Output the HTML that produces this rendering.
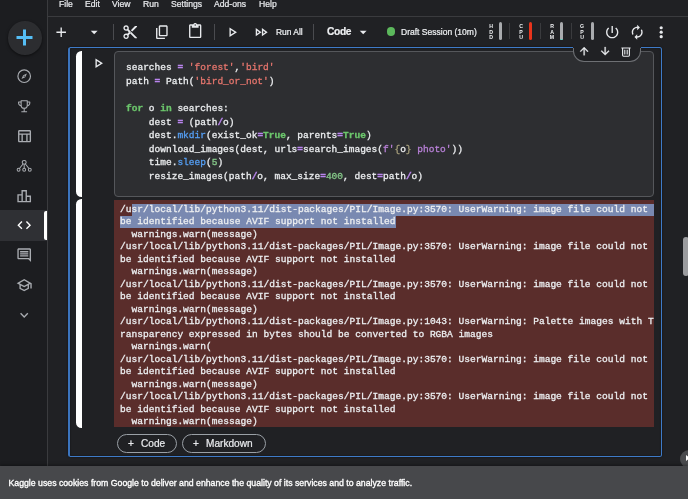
<!DOCTYPE html>
<html><head><meta charset="utf-8">
<style>
*{box-sizing:border-box;margin:0;padding:0}
html,body{width:688px;height:499px;overflow:hidden;background:#202124;font-family:"Liberation Sans",sans-serif;color:#eef0f2;-webkit-text-stroke:0.22px currentColor}
.abs{position:absolute}
#side{left:0;top:0;width:48px;height:499px;background:#1c1d20;border-right:1px solid #3a3b3e}
#menubar{left:48px;top:0;width:640px;height:17px;background:#202124;border-bottom:1px solid #3a3b3e}
#menubar span{position:absolute;top:-3.2px;font-size:8.6px;line-height:14px;color:#e8eaed}
#toolbar{left:48px;top:17px;width:640px;height:30px;background:#202124}
.vsep{position:absolute;width:1px;background:#4a4b4f}
#nb{left:48px;top:47px;width:640px;height:420px;background:#202124}
#cell{left:68px;top:47px;width:593.6px;height:410px;border:1.3px solid #3e7bc8;border-left:2px solid #3b74bd;border-radius:2.5px;box-shadow:0 0 2px rgba(0,0,0,.6),inset 0 0 2px rgba(0,0,0,.5);background:#202124}
.bar{position:absolute;left:75.5px;width:6.6px;background:#fff;border-radius:5.5px 0 0 5.5px}
#code{left:114px;top:51px;width:540px;height:146px;background:#2d2e31;border:1px solid #55575b;border-radius:4px}
pre{font-family:"Liberation Mono",monospace;font-size:9.57px;white-space:pre;color:#eceef0;-webkit-text-stroke:0.3px currentColor}
#code pre{position:absolute;left:11px;top:8.8px;line-height:13.62px;font-size:9.52px}
#out{left:114px;top:200px;width:540px;height:227.3px;background:#5a2d2b;overflow:hidden}
#out pre{position:absolute;left:6px;top:4.2px;line-height:12.48px}
.sel{position:absolute;background:#7989b1}
.k{color:#6cc76c;font-weight:bold}.s{color:#e5756d}.o{color:#bb86f0;font-weight:bold}.f{color:#559ff5}.n{color:#86c98a}.fs{color:#b980d8}.br{color:#a8a07c}
.il{position:absolute;width:6px;text-align:center;font-size:5.2px;line-height:5px;font-weight:bold;color:#f1f3f4;-webkit-text-stroke:0}
.btn{position:absolute;top:433.6px;height:19px;border:1px solid #9aa0a6;border-radius:10px;font-size:10.1px;line-height:17px;color:#e8eaed}
.btn b{position:absolute;font-weight:normal;top:0}
#cookie{left:0;top:465.7px;width:688px;height:34px;background:#47484b;font-size:8.73px;line-height:34.2px;padding-left:8.5px;color:#fff;-webkit-text-stroke:0.32px #fff;box-shadow:0 -1px 3px rgba(0,0,0,.35)}
svg{position:absolute;overflow:visible}
#menubar span,#toolbar span,.btn b,.il,#cookie span,pre{will-change:transform}
</style></head><body>
<div id="nb" class="abs"></div>
<div id="side" class="abs">
  <div class="abs" style="left:8px;top:21px;width:33.5px;height:33.5px;border-radius:50%;background:#2c2d30;box-shadow:0 1px 3px rgba(0,0,0,.55)"></div>
  <div class="abs" style="left:0;top:210px;width:47px;height:31px;background:#2f3034"></div>
  <div class="abs" style="left:44px;top:211px;width:3px;height:29px;background:#fff;border-radius:2px 0 0 2px"></div>
  <svg style="left:15.5px;top:28.5px" width="17" height="17" viewBox="0 0 17 17"><path d="M8.5 0.5v16M0.5 8.5h16" stroke="#55bef5" stroke-width="3" fill="none"/></svg><svg style="left:16.2px;top:67.5px" width="16.4" height="16.4" viewBox="0 0 24 24" fill="none" stroke="#a9acb1" stroke-width="1.7"><circle cx="12" cy="12" r="9.2"/><path d="M16 8l-2.500 5.500L8 16l2.500-5.500z" fill="#a9acb1" stroke="none"/><circle cx="12" cy="12" r="0.9" fill="#1c1d20" stroke="none"/></svg><svg style="left:16.2px;top:98px" width="16.4" height="16.4" viewBox="0 0 24 24" fill="none" stroke="#a9acb1" stroke-width="1.6" stroke-linejoin="round"><path d="M7.500 4h9v6.500a4.500 4.500 0 0 1-9 0z"/><path d="M7.500 5.800H3.800v1.700a3.600 3.600 0 0 0 3.700 3.600M16.500 5.800h3.700v1.700a3.600 3.600 0 0 1-3.700 3.600M12 15v5M7.800 20.200h8.400"/></svg><svg style="left:15.80px;top:127.80px" width="16.4" height="16.4" viewBox="0 0 24 24" fill="#a9acb1"><path d="M20 3H5c-1.1 0-2 .9-2 2v14c0 1.1.9 2 2 2h15c1.1 0 2-.9 2-2V5c0-1.1-.9-2-2-2zm0 2v3H5V5h15zm-5 14h-5v-9h5v9zM5 10h3v9H5v-9zm12 9v-9h3v9h-3z"/></svg><svg style="left:16.2px;top:158px" width="16.4" height="16.4" viewBox="0 0 24 24" fill="none" stroke="#a9acb1" stroke-width="1.5"><circle cx="12" cy="6.400" r="2.900"/><circle cx="3.800" cy="17.200" r="2.100"/><circle cx="12" cy="17.200" r="2.100"/><circle cx="20.200" cy="17.200" r="2.100"/><path d="M12 9.300v5.800M10.300 8.800L5 15.400M13.700 8.800L19 15.400"/></svg><svg style="left:15.80px;top:187.80px" width="16.4" height="16.4" viewBox="0 0 24 24" fill="#a9acb1"><path d="M16 11V3H8v6H2v12h20V11h-6zm-6-6h4v14h-4V5zm-6 6h4v8H4v-8zm16 8h-4v-6h4v6z"/></svg><svg style="left:15.80px;top:217.30px" width="16.4" height="16.4" viewBox="0 0 24 24" fill="#ffffff"><path d="M9.4 16.6L4.8 12l4.6-4.6L8 6l-6 6 6 6 1.4-1.4zm5.2 0l4.6-4.6-4.6-4.6L16 6l6 6-6 6-1.4-1.4z"/></svg><svg style="left:15.80px;top:247.30px" width="16.4" height="16.4" viewBox="0 0 24 24" fill="#a9acb1"><path d="M21.99 4c0-1.1-.89-2-1.99-2H4c-1.1 0-2 .9-2 2v12c0 1.1.9 2 2 2h14l4 4-.01-18zM20 4v13.17L18.830 16H4V4h16zM6 12h12v2H6zm0-3h12v2H6zm0-3h12v2H6z"/></svg><svg style="left:15.80px;top:276.80px" width="16.4" height="16.4" viewBox="0 0 24 24" fill="#a9acb1"><path d="M12 3L1 9l4 2.18v6L12 21l7-3.820v-6l2-1.090V17h2V9L12 3zm6.820 6L12 12.720 5.180 9 12 5.280 18.820 9zM17 15.990l-5 2.730-5-2.730v-3.720L12 15l5-2.730v3.720z"/></svg><svg style="left:15.80px;top:306.80px" width="16.4" height="16.4" viewBox="0 0 24 24" fill="#a9acb1"><path d="M16.59 8.59L12 13.17 7.41 8.59 6 10l6 6 6-6z"/></svg>
</div>
<div id="menubar" class="abs">
  <span style="left:11.25px">File</span><span style="left:36.75px">Edit</span><span style="left:63.75px">View</span><span style="left:94.9px">Run</span><span style="left:122.6px">Settings</span><span style="left:166.1px">Add-ons</span><span style="left:211.1px">Help</span>
</div>
<div id="toolbar" class="abs">
  <div class="vsep" style="left:65px;top:7px;height:16px"></div>
  <div class="vsep" style="left:166px;top:7px;height:16px"></div>
  <div class="vsep" style="left:264.8px;top:7px;height:16px"></div>
  <svg style="left:5.05px;top:6.55px" width="16.4" height="16.4" viewBox="0 0 24 24" fill="#e8eaed"><path d="M19 13h-6v6h-2v-6H5v-2h6V5h2v6h6v2z"/></svg><svg style="left:37.55px;top:6.55px" width="16.4" height="16.4" viewBox="0 0 24 24" fill="#e8eaed"><path d="M7 10l5 5 5-5z"/></svg><svg style="left:74.00px;top:6.55px" width="16.4" height="16.4" viewBox="0 0 24 24" fill="#e8eaed"><path d="M9.64 7.64c.23-.5.36-1.05.36-1.64 0-2.21-1.79-4-4-4S2 3.79 2 6s1.79 4 4 4c.59 0 1.14-.13 1.64-.36L10 12l-2.36 2.36C7.14 14.13 6.59 14 6 14c-2.21 0-4 1.79-4 4s1.79 4 4 4 4-1.79 4-4c0-.59-.13-1.14-.36-1.64L12 14l7 7h3v-1L9.64 7.64zM6 8c-1.1 0-2-.89-2-2s.9-2 2-2 2 .89 2 2-.9 2-2 2zm0 12c-1.1 0-2-.89-2-2s.9-2 2-2 2 .89 2 2-.9 2-2 2zm6-7.5c-.28 0-.5-.22-.5-.5s.22-.5.5-.5.5.22.5.5-.22.5-.5.5zM19 3l-6 6 2 2 7-7V3z"/></svg><svg style="left:106.1px;top:6.6px" width="16.4" height="16.4" viewBox="0 0 24 24" fill="#e8eaed"><path d="M9 18c-1.100 0-2-.9-2-2V4c0-1.100.9-2 2-2h9c1.100 0 2 .9 2 2v12c0 1.100-.9 2-2 2H9zm0-2h9V4H9v12zM5 22c-1.100 0-2-.9-2-2V6h2v14h11v2H5z"/></svg><svg style="left:139.30px;top:6.00px" width="16.4" height="16.4" viewBox="0 0 24 24" fill="#e8eaed"><path d="M19 2h-4.18C14.4.84 13.3 0 12 0c-1.3 0-2.4.84-2.82 2H5c-1.1 0-2 .9-2 2v16c0 1.1.9 2 2 2h14c1.1 0 2-.9 2-2V4c0-1.1-.9-2-2-2zm-7 0c.55 0 1 .45 1 1s-.45 1-1 1-1-.45-1-1 .45-1 1-1zm7 18H5V4h2v3h10V4h2v16z"/></svg><svg style="left:175.80px;top:6.55px" width="16.4" height="16.4" viewBox="0 0 24 24" fill="#e8eaed"><path d="M10 8.64L15.27 12 10 15.36V8.64M8 5v14l11-7L8 5z"/></svg><svg style="left:204.80px;top:6.55px" width="16.4" height="16.4" viewBox="0 0 24 24" fill="#e8eaed"><path d="M15 9.86L18.03 12 15 14.14V9.86m-9 0L9.03 12 6 14.14V9.86M13 6v12l8.5-6L13 6zM4 6v12l8.5-6L4 6z"/></svg><svg style="left:306.80px;top:6.55px" width="16.4" height="16.4" viewBox="0 0 24 24" fill="#e8eaed"><path d="M7 10l5 5 5-5z"/></svg><svg style="left:556.40px;top:6.80px" width="16.4" height="16.4" viewBox="0 0 24 24" fill="#e8eaed"><path d="M13 3h-2v10h2V3zm4.83 2.17l-1.42 1.42C17.99 7.86 19 9.81 19 12c0 3.87-3.13 7-7 7s-7-3.13-7-7c0-2.19 1.01-4.14 2.58-5.42L6.17 5.17C4.23 6.82 3 9.26 3 12c0 4.97 4.03 9 9 9s9-4.03 9-9c0-2.74-1.23-5.18-3.17-6.83z"/></svg><svg style="left:581.00px;top:6.80px" width="16.4" height="16.4" viewBox="0 0 24 24" fill="#e8eaed"><path d="M12 6v3l4-4-4-4v3c-4.42 0-8 3.58-8 8 0 1.57.46 3.03 1.24 4.26L6.7 14.8c-.45-.83-.7-1.79-.7-2.8 0-3.31 2.69-6 6-6zm6.76 1.74L17.3 9.2c.44.84.7 1.79.7 2.8 0 3.31-2.69 6-6 6v-3l-4 4 4 4v-3c4.42 0 8-3.58 8-8 0-1.57-.46-3.03-1.24-4.26z"/></svg><svg style="left:605.4px;top:6.55px" width="16.4" height="16.4" viewBox="0 0 24 24" fill="#e8eaed"><circle cx="12" cy="5.500" r="2.350"/><circle cx="12" cy="12" r="2.350"/><circle cx="12" cy="18.500" r="2.350"/></svg>
  <span class="abs" style="left:227.75px;top:8.7px;font-size:8.45px;line-height:12px">Run All</span>
  <span class="abs" style="left:279px;top:7.6px;font-size:10.2px;letter-spacing:-0.35px;line-height:14px;font-weight:bold">Code</span>
  <span class="abs" style="left:353.25px;top:8.6px;font-size:8.52px;line-height:12px">Draft Session (10m)</span>
  <div class="abs" style="left:338.5px;top:10.25px;width:8.5px;height:8.5px;border-radius:50%;background:#5cb85c"></div>
</div>
<div id="cell" class="abs"></div>
<div class="bar" style="top:50.6px;height:146.8px"></div>
<div class="bar" style="top:199.4px;height:228.9px"></div>
<div id="code" class="abs"><pre>searches <span class="o">=</span> <span class="s">'forest'</span>,<span class="s">'bird'</span>
path <span class="o">=</span> Path(<span class="s">'bird_or_not'</span>)

<span class="k">for</span> o <span class="k">in</span> searches:
    dest <span class="o">=</span> (path<span class="o">/</span>o)
    dest.<span class="f">mkdir</span>(exist_ok<span class="o">=</span><span class="k">True</span>, parents<span class="o">=</span><span class="k">True</span>)
    download_images(dest, urls<span class="o">=</span>search_images(<span class="fs">f'</span><span class="br">{</span>o<span class="br">}</span><span class="fs"> photo'</span>))
    time.<span class="f">sleep</span>(<span class="n">5</span>)
    resize_images(path<span class="o">/</span>o, max_size<span class="o">=</span><span class="n">400</span>, dest<span class="o">=</span>path<span class="o">/</span>o)</pre></div>
<div id="out" class="abs"><div class="sel" style="left:17.5px;top:3.7px;width:523px;height:12.4px"></div><div class="sel" style="left:6px;top:16.1px;width:275.7px;height:12.4px"></div><pre>/usr/local/lib/python3.11/dist-packages/PIL/Image.py:3570: UserWarning: image file could not
be identified because AVIF support not installed
  warnings.warn(message)
/usr/local/lib/python3.11/dist-packages/PIL/Image.py:3570: UserWarning: image file could not
be identified because AVIF support not installed
  warnings.warn(message)
/usr/local/lib/python3.11/dist-packages/PIL/Image.py:3570: UserWarning: image file could not
be identified because AVIF support not installed
  warnings.warn(message)
/usr/local/lib/python3.11/dist-packages/PIL/Image.py:1043: UserWarning: Palette images with T
ransparency expressed in bytes should be converted to RGBA images
  warnings.warn(
/usr/local/lib/python3.11/dist-packages/PIL/Image.py:3570: UserWarning: image file could not
be identified because AVIF support not installed
  warnings.warn(message)
/usr/local/lib/python3.11/dist-packages/PIL/Image.py:3570: UserWarning: image file could not
be identified because AVIF support not installed
  warnings.warn(message)</pre></div>
<span class="il" style="left:487.6px;top:24.0px">H</span><span class="il" style="left:487.6px;top:29.7px">D</span><span class="il" style="left:487.6px;top:35.4px">D</span><div class="abs" style="left:498.7px;top:22.2px;width:3px;height:18.2px;border-radius:1.5px;background:#a9abae;overflow:hidden"></div><span class="il" style="left:518px;top:24.0px">C</span><span class="il" style="left:518px;top:29.7px">P</span><span class="il" style="left:518px;top:35.4px">U</span><div class="abs" style="left:529.4px;top:22.2px;width:3px;height:18.2px;border-radius:1.5px;background:#e8341c;overflow:hidden"></div><span class="il" style="left:549px;top:24.0px">R</span><span class="il" style="left:549px;top:29.7px">A</span><span class="il" style="left:549px;top:35.4px">M</span><div class="abs" style="left:560.2px;top:22.2px;width:3px;height:18.2px;border-radius:1.5px;background:#a9abae;overflow:hidden"><div style="position:absolute;left:0;bottom:0;width:3px;height:1.4px;background:#5fd3c4"></div></div><span class="il" style="left:579.3px;top:24.0px">G</span><span class="il" style="left:579.3px;top:29.7px">P</span><span class="il" style="left:579.3px;top:35.4px">U</span><div class="abs" style="left:590.7px;top:22.2px;width:3px;height:18.2px;border-radius:1.5px;background:#a9abae;overflow:hidden"></div><div class="vsep" style="left:509.4px;top:23px;height:16px;background:#3a3b3e"></div><div class="vsep" style="left:539.9px;top:23px;height:16px;background:#3a3b3e"></div><div class="vsep" style="left:570.9px;top:23px;height:16px;background:#3a3b3e"></div>
<div class="abs" style="left:573px;top:40px;width:68px;height:22px;border:1px solid #6e7074;border-top:none;border-radius:0 0 11px 11px;background:#202124"></div><div class="abs" style="left:573px;top:40px;width:68px;height:8px;background:#202124"></div><svg style="left:578.05px;top:45.35px" width="12.3" height="12.3" viewBox="0 0 24 24" fill="#e8eaed"><path d="M4 12l1.41 1.41L11 7.83V20h2V7.83l5.58 5.59L20 12l-8-8-8 8z" stroke="#e8eaed" stroke-width="0.7"/></svg><svg style="left:599.05px;top:45.35px" width="12.3" height="12.3" viewBox="0 0 24 24" fill="#e8eaed"><path d="M20 12l-1.41-1.41L13 16.17V4h-2v12.17l-5.58-5.59L4 12l8 8 8-8z" stroke="#e8eaed" stroke-width="0.7"/></svg><svg style="left:620.3px;top:45.5px" width="12" height="12" viewBox="-6 -6 12 12" fill="none" stroke="#e8eaed" stroke-width="1.15"><path d="M-4.600 -4h9.200M-3.400 -4v7.300a.9 .9 0 0 0 .9 .9h5a.9 .9 0 0 0 .9-.9V-4"/><path d="M-1.200 -2.300v4.900M1.200 -2.300v4.900" stroke-width="1.100"/></svg>
<svg style="left:89.50px;top:55.20px" width="16.4" height="16.4" viewBox="0 0 24 24" fill="#e8eaed"><path d="M10 8.64L15.27 12 10 15.36V8.64M8 5v14l11-7L8 5z"/></svg>
<div class="btn" style="left:117px;width:60px"><b style="left:10.3px">+</b><b style="left:23.3px">Code</b></div>
<div class="btn" style="left:182px;width:83.5px"><b style="left:10.3px">+</b><b style="left:22.8px">Markdown</b></div>
<div class="abs" style="left:682.5px;top:236.5px;width:6px;height:39px;background:#9b9c9f;border-radius:3px"></div>
<div class="abs" style="left:679.6px;top:449.6px;width:18px;height:18px;border-radius:50%;background:#4a4b4e"></div><div class="abs" style="left:685.5px;top:455px;width:0;height:0;border-left:4px solid #fff;border-top:3.5px solid transparent;border-bottom:3.5px solid transparent"></div>
<div id="cookie" class="abs"><span>Kaggle uses cookies from Google to deliver and enhance the quality of its services and to analyze traffic.</span></div>
</body></html>
